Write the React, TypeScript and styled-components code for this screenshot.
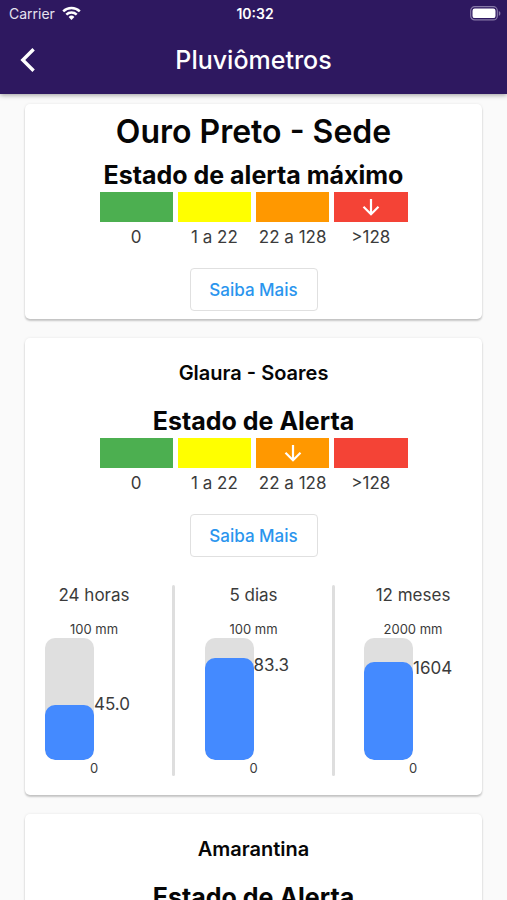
import React from 'react';
import styled, { createGlobalStyle } from 'styled-components';

const GlobalStyle = createGlobalStyle`
  *, *::before, *::after { box-sizing: border-box; }
  body {
    margin: 0;
    background: #fafafa;
    color: #3b3b3b;
    font-family: Inter, "Liberation Sans", sans-serif;
  }
`;

const Screen = styled.div`
  display: flex;
  flex-direction: column;
  height: 100vh;
  overflow: hidden;
`;

const Header = styled.header`
  flex: none;
  z-index: 1;
  padding-bottom: 2px;
  background: #2e1860;
  color: #fff;
  box-shadow: 0 1px 5px rgba(0, 0, 0, 0.4);
`;

const StatusBar = styled.div`
  display: grid;
  grid-template-columns: 1fr auto 1fr;
  align-items: center;
  height: 27px;
  padding: 0 6px 0 9px;
  font-size: 14px;
  line-height: 20px;
`;

const Carrier = styled.div`
  display: flex;
  align-items: center;
  gap: 7px;
  color: #e6e2ef;
`;

const Clock = styled.time`
  font-weight: 600;
`;

const BatterySlot = styled.div`
  display: flex;
  justify-content: flex-end;
`;

const Toolbar = styled.div`
  display: grid;
  grid-template-columns: 56px 1fr 56px;
  align-items: center;
  height: 65px;
`;

const BackButton = styled.button`
  display: flex;
  align-items: center;
  justify-content: center;
  width: 56px;
  height: 56px;
  padding: 0;
  border: 0;
  background: none;
  color: inherit;
  cursor: pointer;
`;

const PageTitle = styled.h1`
  margin: 0;
  text-align: center;
  font-size: 25px;
  font-weight: 500;
  line-height: 32px;
`;

const Stations = styled.main`
  flex: 1;
  min-height: 0;
  overflow-y: auto;
  scrollbar-width: none;
  display: flex;
  flex-direction: column;
  gap: 19px;
  padding: 10px 25px;
`;

const Card = styled.section<{ $featured?: boolean }>`
  flex: none;
  display: flex;
  flex-direction: column;
  align-items: center;
  padding: ${(p) => (p.$featured ? '8px 20px' : '23px 20px 19px')};
  border-radius: 5px;
  background: #fff;
  box-shadow: 0 2px 2px rgba(0, 0, 0, 0.2), 0 0 3px rgba(0, 0, 0, 0.08);
`;

const StationName = styled.h2<{ $featured?: boolean }>`
  margin: 0 0 ${(p) => (p.$featured ? 6 : 19)}px;
  color: #060606;
  font-size: ${(p) => (p.$featured ? 32 : 20)}px;
  font-weight: 600;
  line-height: ${(p) => (p.$featured ? 40 : 24)}px;
`;

const AlertState = styled.p`
  margin: 0;
  color: #060606;
  font-size: 25px;
  font-weight: 700;
  line-height: 34px;
  text-align: center;
`;

const Scale = styled.ul`
  display: grid;
  grid-template-columns: repeat(4, 1fr);
  column-gap: 5px;
  width: 308px;
  max-width: 100%;
  margin: 0 0 16px;
  padding: 0;
  list-style: none;
`;

const Level = styled.li`
  text-align: center;
  font-size: 17px;
  line-height: 30px;
  white-space: nowrap;
`;

const Swatch = styled.div<{ $color: string }>`
  display: flex;
  align-items: center;
  justify-content: center;
  height: 30px;
  background: ${(p) => p.$color};
  color: #fff;
`;

const MoreButton = styled.button`
  width: 128px;
  height: 43px;
  padding: 0;
  border: 1px solid #e0e0e0;
  border-radius: 4px;
  background: #fff;
  color: #2a95ee;
  font: 500 17px/24px Inter, "Liberation Sans", sans-serif;
  cursor: pointer;
`;

const Gauges = styled.div`
  align-self: stretch;
  display: flex;
  justify-content: space-between;
  margin-top: 28px;
`;

const Divider = styled.div`
  width: 3px;
  border-radius: 2px;
  background: #dedede;
`;

const GaugeBox = styled.div`
  display: flex;
  flex-direction: column;
  align-items: center;
  width: 98px;
  white-space: nowrap;
`;

const Period = styled.h3`
  margin: 0 0 16px;
  font-size: 17px;
  font-weight: 400;
  line-height: 20px;
`;

const Bound = styled.div`
  font-size: 13px;
  line-height: 16px;
`;

const GaugeBody = styled.div`
  display: grid;
  grid-template-columns: 1fr 1fr;
  width: 100%;
  height: 122px;
  margin-top: 1px;
`;

const Tube = styled.div`
  display: flex;
  align-items: flex-end;
  border-radius: 10px;
  background: #dfdfdf;
  overflow: hidden;
`;

const Water = styled.div`
  width: 100%;
  border-radius: 10px;
  background: #448aff;
`;

const Reading = styled.div`
  display: flex;
  flex-direction: column;
  font-size: 17px;
  line-height: 20px;
`;

const Spacer = styled.div`
  flex-basis: 0;
`;

const levels = [
  { color: '#4caf50', label: '0' },
  { color: '#ffff00', label: '1 a 22' },
  { color: '#ff9800', label: '22 a 128' },
  { color: '#f44336', label: '>128' },
];

type GaugeData = { period: string; max: number; value: number; text: string };
type Station = { name: string; state: string; level: number; featured?: boolean; gauges?: GaugeData[] };

const gauges: GaugeData[] = [
  { period: '24 horas', max: 100, value: 45, text: '45.0' },
  { period: '5 dias', max: 100, value: 83.3, text: '83.3' },
  { period: '12 meses', max: 2000, value: 1604, text: '1604' },
];

const stations: Station[] = [
  { name: 'Ouro Preto - Sede', state: 'Estado de alerta máximo', level: 3, featured: true },
  { name: 'Glaura - Soares', state: 'Estado de Alerta', level: 2, gauges },
  { name: 'Amarantina', state: 'Estado de Alerta', level: 2 },
];

function WifiIcon() {
  return (
    <svg width="19" height="15" viewBox="0 0 19 15" fill="none" stroke="#fff" strokeWidth="2.5" aria-hidden="true">
      <path d="M1.2 5.3a12 12 0 0 1 16.6 0" />
      <path d="M4.3 8.6a7.5 7.5 0 0 1 10.4 0" />
      <path d="M9.5 14l-2.9-3.1a4.2 4.2 0 0 1 5.8 0z" fill="#fff" stroke="none" />
    </svg>
  );
}

function BatteryIcon() {
  return (
    <svg width="31" height="15" viewBox="0 0 31 15" aria-hidden="true">
      <rect x="0.7" y="0.7" width="26.6" height="13.2" rx="4" fill="none" stroke="#8779a8" strokeWidth="1.2" />
      <rect x="2.5" y="2.5" width="23" height="9.6" rx="2.2" fill="#fff" />
      <path d="M28.8 5v4.8c1-.4 1.6-1.3 1.6-2.4S29.8 5.4 28.8 5z" fill="#8779a8" />
    </svg>
  );
}

function BackIcon() {
  return (
    <svg width="16" height="26" viewBox="0 0 16 26" fill="none" stroke="#fff" strokeWidth="3.4" aria-hidden="true">
      <path d="M13.6 2.2 2.8 13l10.800 10.800" />
    </svg>
  );
}

function ArrowDown() {
  return (
    <svg width="18" height="18" viewBox="0 0 18 18" fill="none" stroke="#fff" strokeWidth="2.2" aria-label="Nível atual">
      <path d="M9 1v15M1.5 8.700 9 16.200l7.500-7.500" />
    </svg>
  );
}

function Gauge({ period, max, value, text }: GaugeData) {
  const ratio = value / max;
  return (
    <GaugeBox>
      <Period>{period}</Period>
      <Bound>{max} mm</Bound>
      <GaugeBody>
        <Tube>
          <Water style={{ height: `${ratio * 100}%` }} />
        </Tube>
        <Reading>
          <Spacer style={{ flexGrow: 1 - ratio }} />
          {text}
          <Spacer style={{ flexGrow: ratio }} />
        </Reading>
      </GaugeBody>
      <Bound>0</Bound>
    </GaugeBox>
  );
}

function StationCard({ name, state, level, featured, gauges: list }: Station) {
  return (
    <Card $featured={featured}>
      <StationName $featured={featured}>{name}</StationName>
      <AlertState>{state}</AlertState>
      <Scale>
        {levels.map((l, i) => (
          <Level key={l.label}>
            <Swatch $color={l.color}>{i === level && <ArrowDown />}</Swatch>
            {l.label}
          </Level>
        ))}
      </Scale>
      <MoreButton type="button">Saiba Mais</MoreButton>
      {list && (
        <Gauges>
          {list.map((g, i) => (
            <React.Fragment key={g.period}>
              {i > 0 && <Divider />}
              <Gauge {...g} />
            </React.Fragment>
          ))}
        </Gauges>
      )}
    </Card>
  );
}

export default function App() {
  return (
    <Screen>
      <GlobalStyle />
      <Header>
        <StatusBar>
          <Carrier>
            Carrier
            <WifiIcon />
          </Carrier>
          <Clock>10:32</Clock>
          <BatterySlot>
            <BatteryIcon />
          </BatterySlot>
        </StatusBar>
        <Toolbar>
          <BackButton type="button" aria-label="Voltar">
            <BackIcon />
          </BackButton>
          <PageTitle>Pluviômetros</PageTitle>
        </Toolbar>
      </Header>
      <Stations>
        {stations.map((s) => (
          <StationCard key={s.name} {...s} />
        ))}
      </Stations>
    </Screen>
  );
}
